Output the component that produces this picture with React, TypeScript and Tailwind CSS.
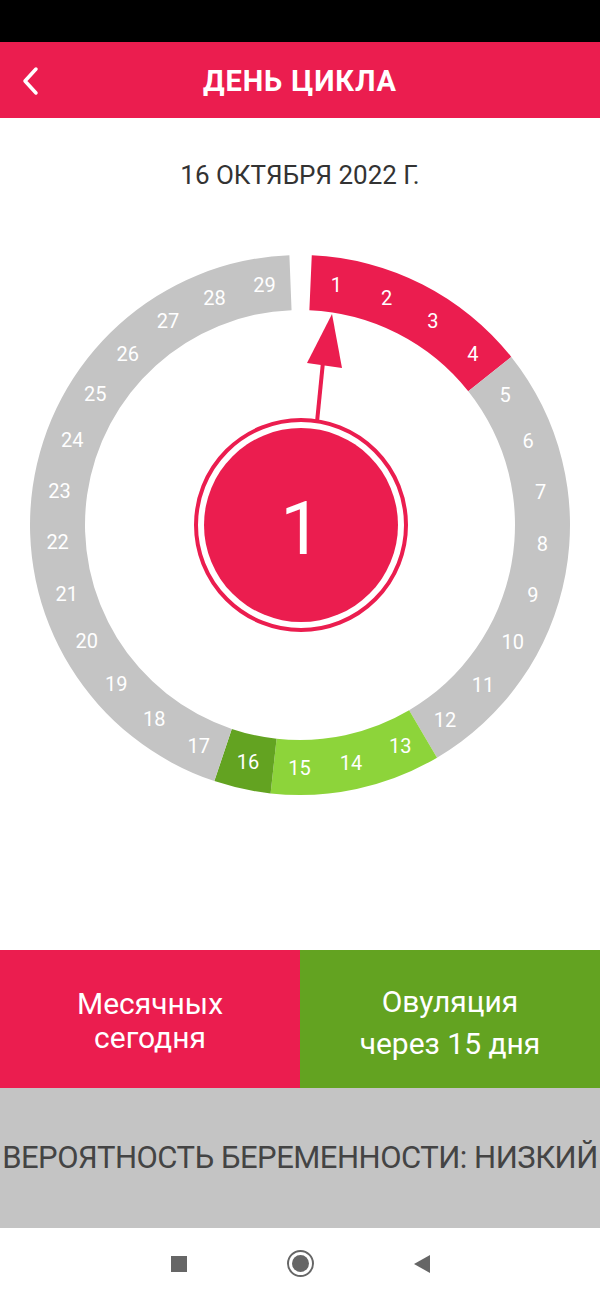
const CX = 300;
const CY = 293;
const R_IN = 215;
const R_OUT = 270;
const START = 2.5;
const STEP = 12.25;

const RED = "#EB1D4F";
const GRAY = "#C4C4C4";
const LIGHT = "#8DD43A";
const DARK = "#63A321";

function pt(r: number, deg: number) {
  const a = (deg * Math.PI) / 180;
  return [CX + r * Math.sin(a), CY - r * Math.cos(a)];
}

function sector(a0: number, a1: number) {
  const [x0, y0] = pt(R_OUT, a0);
  const [x1, y1] = pt(R_OUT, a1);
  const [x2, y2] = pt(R_IN, a1);
  const [x3, y3] = pt(R_IN, a0);
  const large = a1 - a0 > 180 ? 1 : 0;
  return `M${x0} ${y0} A${R_OUT} ${R_OUT} 0 ${large} 1 ${x1} ${y1} L${x2} ${y2} A${R_IN} ${R_IN} 0 ${large} 0 ${x3} ${y3} Z`;
}

// runs of days with the same colour
const runs: [number, number, string][] = [
  [1, 4, RED],
  [5, 12, GRAY],
  [13, 15, LIGHT],
  [16, 16, DARK],
  [17, 29, GRAY],
];

function CycleRing() {
  const days = Array.from({ length: 29 }, (_, i) => i + 1);
  return (
    <svg width="600" height="580" viewBox="0 0 600 580" className="block">
      {runs.map(([from, to, color]) => (
        <path
          key={from}
          d={sector(START + (from - 1) * STEP, START + to * STEP)}
          fill={color}
        />
      ))}
      {days.map((d) => {
        const [x, y] = pt(243, START + (d - 0.5) * STEP);
        return (
          <text
            key={d}
            x={x}
            y={y}
            textAnchor="middle"
            dominantBaseline="central"
            fill="#fff"
            fontSize="20"
            fontFamily="Roboto, 'Noto Sans', sans-serif"
          >
            {d}
          </text>
        );
      })}

      {/* arrow to current day */}
      <line x1="317" y1={422 - 232} x2="323" y2={362 - 232} stroke={RED} strokeWidth="4" />
      <polygon points={`332,${314 - 232} 307,${363 - 232} 342,${368 - 232}`} fill={RED} />

      {/* center badge */}
      <circle cx={CX + 1} cy={CY} r="105" fill="#fff" stroke={RED} strokeWidth="4" />
      <circle cx={CX + 1} cy={CY} r="97" fill={RED} />
      <text
        x={CX + 1}
        y={CY + 3}
        textAnchor="middle"
        dominantBaseline="central"
        fill="#fff"
        fontSize="74"
        fontFamily="Roboto, 'Noto Sans', sans-serif"
      >
        1
      </text>
    </svg>
  );
}

export default function App() {
  return (
    <div className="flex h-[1299px] w-[600px] flex-col bg-white font-['Roboto','Noto_Sans',sans-serif]">
      <div className="h-[42px] bg-black" />

      <header className="relative flex h-[76px] items-center justify-center bg-[#EB1D4F]">
        <svg className="absolute left-[20px] top-[24px]" width="22" height="30" viewBox="0 0 22 30">
          <polyline points="16,3 5,15 16,27" fill="none" stroke="#fff" strokeWidth="3.5" strokeLinecap="round" strokeLinejoin="round" />
        </svg>
        <h1 className="pt-[3px] text-[29px] font-bold tracking-[0.9px] text-white">ДЕНЬ ЦИКЛА</h1>
      </header>

      <main className="flex flex-1 flex-col">
        <div className="flex h-[114px] items-center justify-center text-[26px] text-[#333]">
          16 ОКТЯБРЯ 2022 Г.
        </div>
        <CycleRing />
      </main>

      <div className="grid h-[138px] grid-cols-2 text-[30px] text-white">
        <div className="flex flex-col items-center justify-center bg-[#EB1D4F] pt-[4px] leading-[34px]">
          <span>Месячных</span>
          <span>сегодня</span>
        </div>
        <div className="flex flex-col items-center justify-center bg-[#63A321] pt-[8px] leading-[42px]">
          <span>Овуляция</span>
          <span>через 15 дня</span>
        </div>
      </div>

      <div className="flex h-[140px] items-center justify-center overflow-hidden bg-[#C4C4C4]">
        <span className="whitespace-nowrap text-[31px] tracking-[-0.5px] text-[#444]">
          ВЕРОЯТНОСТЬ БЕРЕМЕННОСТИ: НИЗКИЙ
        </span>
      </div>

      <nav className="flex h-[71px] items-center justify-center gap-[100px] bg-white">
        <div className="h-[16px] w-[16px] bg-[#666]" />
        <div className="flex h-[27px] w-[27px] items-center justify-center rounded-full border-[2.5px] border-[#666]">
          <div className="h-[17px] w-[17px] rounded-full bg-[#666]" />
        </div>
        <svg width="16" height="18" viewBox="0 0 16 18">
          <polygon points="16,0 16,18 0,9" fill="#666" />
        </svg>
      </nav>
    </div>
  );
}
